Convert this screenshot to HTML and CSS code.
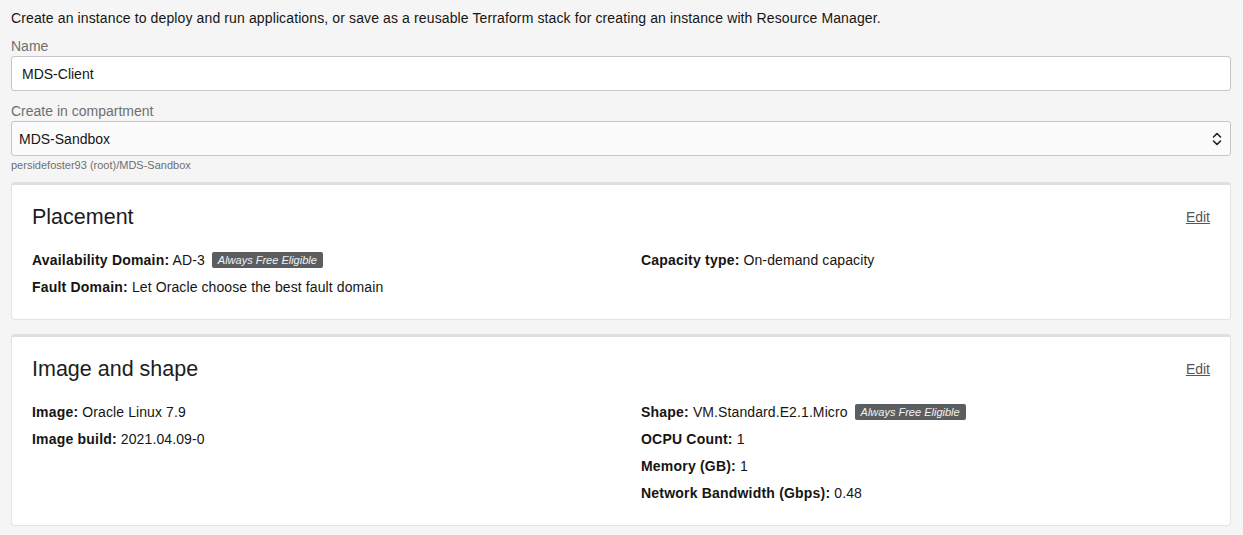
FILE: index.html
```html
<!DOCTYPE html>
<html lang="en">
<head>
<meta charset="utf-8">
<title>Create compute instance</title>
<link rel="stylesheet" href="styles.css">
</head>
<body>
<main class="page">
  <p class="intro">Create an instance to deploy and run applications, or save as a reusable Terraform stack for creating an instance with Resource Manager.</p>

  <div class="field">
    <label class="field-label">Name</label>
    <div class="input">MDS-Client</div>
  </div>

  <div class="field">
    <label class="field-label">Create in compartment</label>
    <div class="select">
      <span>MDS-Sandbox</span>
      <svg class="chev" width="10" height="14" viewBox="0 0 10 14" aria-hidden="true">
        <path d="M1.5 5 L5 1.5 L8.5 5" fill="none" stroke="#222" stroke-width="1.6" stroke-linecap="round" stroke-linejoin="round"/>
        <path d="M1.5 9 L5 12.5 L8.5 9" fill="none" stroke="#222" stroke-width="1.6" stroke-linecap="round" stroke-linejoin="round"/>
      </svg>
    </div>
    <div class="helper">persidefoster93 (root)/MDS-Sandbox</div>
  </div>

  <section class="card">
    <header class="card-head">
      <h2 class="card-title">Placement</h2>
      <a class="edit" href="#">Edit</a>
    </header>
    <div class="cols">
      <div class="col">
        <div class="row"><b>Availability Domain:</b> AD-3 <span class="badge">Always Free Eligible</span></div>
        <div class="row"><b>Fault Domain:</b> Let Oracle choose the best fault domain</div>
      </div>
      <div class="col">
        <div class="row"><b>Capacity type:</b> On-demand capacity</div>
      </div>
    </div>
  </section>

  <section class="card">
    <header class="card-head">
      <h2 class="card-title">Image and shape</h2>
      <a class="edit" href="#">Edit</a>
    </header>
    <div class="cols">
      <div class="col">
        <div class="row"><b>Image:</b> Oracle Linux 7.9</div>
        <div class="row"><b>Image build:</b> 2021.04.09-0</div>
      </div>
      <div class="col">
        <div class="row"><b>Shape:</b> VM.Standard.E2.1.Micro <span class="badge">Always Free Eligible</span></div>
        <div class="row"><b>OCPU Count:</b> 1</div>
        <div class="row"><b>Memory (GB):</b> 1</div>
        <div class="row"><b>Network Bandwidth (Gbps):</b> 0.48</div>
      </div>
    </div>
  </section>
</main>
</body>
</html>
```

FILE: styles.css
```css
* { box-sizing: border-box; }

html, body {
  margin: 0;
  background: #f5f5f5;
}

body {
  font-family: "Liberation Sans", Arial, sans-serif;
  color: #161513;
}

.page {
  padding: 9px 12px 0 11px;
}

.intro {
  margin: 0;
  font-size: 14px;
  line-height: 18px;
  letter-spacing: 0.12px;
}

.field {
  margin-top: 11px;
}

.field + .field {
  margin-top: 12px;
}

.field-label {
  display: block;
  font-size: 14px;
  line-height: 17px;
  color: #6f6f6f;
  margin-bottom: 1px;
}

.input,
.select {
  height: 35px;
  border: 1px solid #c6c6ca;
  border-radius: 3px;
  font-size: 14px;
  display: flex;
  align-items: center;
}

.input {
  background: #fff;
  padding-left: 10px;
}

.select {
  background: #fbfbfb;
  padding: 0 8px 0 7px;
  justify-content: space-between;
}

.chev {
  display: block;
}

.helper {
  font-size: 11px;
  line-height: 13px;
  color: #6f6f6f;
  margin-top: 3px;
}

.card {
  background: #fff;
  border: 1px solid #e3e3e5;
  border-top: 3px solid #e0e0e3;
  border-radius: 4px;
  padding: 19px 20px 18px;
  margin-top: 10px;
}

.card + .card {
  margin-top: 14px;
}

.card-head {
  display: flex;
  justify-content: space-between;
  align-items: center;
  margin-bottom: 17px;
}

.card-title {
  margin: 0;
  font-size: 21.5px;
  font-weight: normal;
  line-height: 26px;
  color: #1d1d1d;
}

.edit {
  font-size: 14px;
  color: #555;
  text-decoration: underline;
}

.cols {
  display: grid;
  grid-template-columns: 1fr 1fr;
  column-gap: 40px;
}

.row {
  font-size: 14px;
  line-height: 27px;
  white-space: nowrap;
  letter-spacing: 0.1px;
}

.row b {
  font-weight: bold;
  letter-spacing: 0.2px;
}

.badge {
  display: inline-block;
  margin-left: 3px;
  padding: 0 6px;
  background: #5b5e61;
  color: #f2f2f2;
  font-size: 11px;
  font-style: italic;
  line-height: 16px;
  border-radius: 2px;
  vertical-align: 1px;
  letter-spacing: 0;
}
```
